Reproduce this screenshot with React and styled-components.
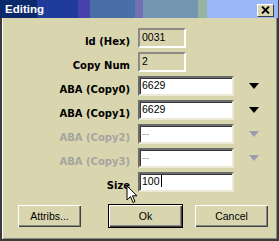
import React from "react";
import styled, { createGlobalStyle } from "styled-components";

const GlobalStyle = createGlobalStyle`
  html, body {
    margin: 0;
    padding: 0;
    background: #d9d5af;
  }
`;

const Window = styled.div`
  position: relative;
  width: 279px;
  height: 241px;
  box-sizing: border-box;
  background: #d9d5af;
  border-left: 2px solid #3a3a3a;
  border-right: 2px solid #3a3a3a;
  border-bottom: 2px solid #3a3a3a;
  box-shadow: inset 1px 0 0 #ffffff, inset -1px -1px 0 #8a8a80;
  display: flex;
  flex-direction: column;
  font-family: "Liberation Sans", Arial, sans-serif;
`;

const TitleBar = styled.div`
  height: 18px;
  margin-left: -2px;
  margin-right: -1px;
  display: flex;
  align-items: center;
  justify-content: space-between;
  padding: 0 4px 0 5px;
  background: linear-gradient(
    to right,
    #0b2a6c 0px,
    #0b2a6c 37px,
    #1f3c9c 37px,
    #1f3c9c 78px,
    #4742ae 78px,
    #4742ae 90px,
    #4a6ea8 90px,
    #4a6ea8 135px,
    #7270b2 135px,
    #7270b2 143px,
    #7296b0 143px,
    #7296b0 198px,
    #98b4a0 198px,
    #98b4a0 207px,
    #99b6f6 207px
  );
`;

const Title = styled.span`
  color: #ffffff;
  font-weight: bold;
  font-size: 11.5px;
`;

const CloseButton = styled.div`
  width: 17px;
  height: 13px;
  margin-top: 2px;
  box-sizing: border-box;
  background: #d9d5af;
  border: 1px solid;
  border-color: #ffffff #404040 #404040 #ffffff;
  display: flex;
  align-items: center;
  justify-content: center;
`;

const Form = styled.div`
  display: grid;
  grid-template-columns: 128px 96px 1fr;
  grid-auto-rows: 20px;
  column-gap: 8px;
  row-gap: 4px;
  margin-top: 10px;
`;

const Label = styled.div`
  font-family: "DejaVu Sans", Verdana, sans-serif;
  font-weight: bold;
  font-size: 10px;
  text-align: right;
  align-self: end;
  padding-bottom: 1px;
  color: ${(p) => (p.disabled ? "#a4a4a0" : "#000000")};
`;

const Field = styled.div`
  box-sizing: border-box;
  width: ${(p) => (p.short ? "48px" : "96px")};
  height: 20px;
  padding: 1px 2px;
  font-size: 10.5px;
  line-height: 12px;
  border: 2px solid;
  border-color: ${(p) =>
    p.readOnly
      ? "#8a8a84 #ffffff #ffffff #8a8a84"
      : "#6a6a66 #ece9d8 #ece9d8 #6a6a66"};
  box-shadow: ${(p) =>
    p.readOnly ? "none" : "inset 1px 1px 0 #3a3a3a"};
  background: ${(p) => (p.readOnly ? "#d9d5af" : "#ffffff")};
  color: ${(p) => (p.disabled ? "#a4a4a0" : "#000000")};
  display: flex;
  align-items: flex-start;
`;

const Caret = styled.span`
  display: inline-block;
  width: 1px;
  height: 12px;
  margin-left: 1px;
  background: #000000;
`;

const ArrowCell = styled.div`
  display: flex;
  align-items: center;
  padding-left: 7px;
`;

const Buttons = styled.div`
  display: flex;
  margin-top: 12px;
  padding-left: 15px;
  gap: 11px;
`;

const Button = styled.div`
  box-sizing: border-box;
  width: ${(p) => p.w}px;
  height: 24px;
  display: flex;
  align-items: center;
  justify-content: center;
  font-size: 10.5px;
  background: #d9d5af;
  border: 1px solid ${(p) => (p.isDefault ? "#000000" : "transparent")};
  box-shadow: inset 1px 1px 0 #ffffff, inset -1px -1px 0 #404040,
    inset -2px -2px 0 #8a8a84;
  margin-left: ${(p) => p.ml || 0}px;
`;

const Pointer = styled.svg`
  position: absolute;
  left: 124px;
  top: 185px;
`;

function DownArrow({ disabled }) {
  return (
    <svg width="10" height="6" viewBox="0 0 10 6">
      <path d="M0 0 H10 L5 6 Z" fill={disabled ? "#9c9cb0" : "#000000"} />
    </svg>
  );
}

const rows = [
  { label: "Id (Hex)", value: "0031", readOnly: true, short: true },
  { label: "Copy Num", value: "2", readOnly: true, short: true },
  { label: "ABA (Copy0)", value: "6629", arrow: true },
  { label: "ABA (Copy1)", value: "6629", arrow: true },
  { label: "ABA (Copy2)", value: "--", arrow: true, disabled: true },
  { label: "ABA (Copy3)", value: "--", arrow: true, disabled: true },
  { label: "Size", value: "100", caret: true },
];

export default function App() {
  return (
    <>
      <GlobalStyle />
      <Window>
        <TitleBar>
          <Title>Editing</Title>
          <CloseButton>
            <svg width="9" height="8" viewBox="0 0 9 8">
              <path
                d="M1 0.5 L8 7.5 M8 0.5 L1 7.5"
                stroke="#000"
                strokeWidth="1.8"
              />
            </svg>
          </CloseButton>
        </TitleBar>
        <Form>
          {rows.map((r) => (
            <React.Fragment key={r.label}>
              <Label disabled={r.disabled}>{r.label}</Label>
              <Field
                readOnly={r.readOnly}
                short={r.short}
                disabled={r.disabled}
              >
                {r.value}
                {r.caret && <Caret />}
              </Field>
              <ArrowCell>
                {r.arrow && <DownArrow disabled={r.disabled} />}
              </ArrowCell>
            </React.Fragment>
          ))}
        </Form>
        <Buttons>
          <Button w={65}>Attribs...</Button>
          <Button w={75} ml={15} isDefault>
            Ok
          </Button>
          <Button w={75}>Cancel</Button>
        </Buttons>
        <Pointer width="14" height="20" viewBox="0 0 14 20">
          <path
            d="M1 1 L1 15 L4.5 11.5 L7 17.5 L9 16.5 L6.5 10.8 L11 10.8 Z"
            fill="#ffffff"
            stroke="#000000"
            strokeWidth="1"
            strokeLinejoin="miter"
          />
        </Pointer>
      </Window>
    </>
  );
}
